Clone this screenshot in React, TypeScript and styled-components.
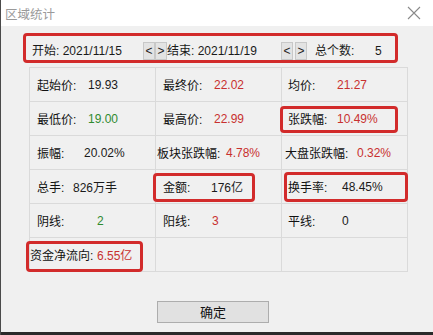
import React from 'react';
import styled, { createGlobalStyle } from 'styled-components';

const GlobalStyle = createGlobalStyle`
  html, body {
    margin: 0;
    padding: 0;
    background: #f0f0f0;
  }
  * {
    box-sizing: border-box;
  }
`;

type Tone = 'plain' | 'red' | 'green';

type Stat = {
  label: string;
  value?: string;
  tone?: Tone;
  labelAt?: number;
  valueAt?: number;
  mark?: { left: number; top: number; width: number; height: number };
};

const stats: Stat[] = [
  { label: '起始价:', value: '19.93', labelAt: 8, valueAt: 59 },
  { label: '最终价:', value: '22.02', tone: 'red', labelAt: 8, valueAt: 59 },
  { label: '均价:', value: '21.27', tone: 'red', labelAt: 7, valueAt: 56 },
  { label: '最低价:', value: '19.00', tone: 'green', labelAt: 8, valueAt: 59 },
  { label: '最高价:', value: '22.99', tone: 'red', labelAt: 8, valueAt: 59 },
  {
    label: '张跌幅:', value: '10.49%', tone: 'red', labelAt: 7, valueAt: 56,
    mark: { left: -2, top: 4, width: 118, height: 27 },
  },
  { label: '振幅:', value: '20.02%', labelAt: 8, valueAt: 55 },
  { label: '板块张跌幅:', value: '4.78%', tone: 'red', labelAt: 2, valueAt: 71 },
  { label: '大盘张跌幅:', value: '0.32%', tone: 'red', labelAt: 4, valueAt: 76 },
  { label: '总手:', value: '826万手', labelAt: 8, valueAt: 44 },
  {
    label: '金额:', value: '176亿', labelAt: 8, valueAt: 56,
    mark: { left: -3, top: 3, width: 102, height: 29 },
  },
  {
    label: '换手率:', value: '48.45%', labelAt: 7, valueAt: 61,
    mark: { left: 2, top: 2, width: 124, height: 30 },
  },
  { label: '阴线:', value: '2', tone: 'green', labelAt: 8, valueAt: 68 },
  { label: '阳线:', value: '3', tone: 'red', labelAt: 8, valueAt: 57 },
  { label: '平线:', value: '0', labelAt: 7, valueAt: 61 },
  {
    label: '资金净流向:', value: '6.55亿', tone: 'red', labelAt: 1, valueAt: 68,
    mark: { left: -4, top: 3, width: 117, height: 31 },
  },
  { label: '' },
  { label: '' },
];

const toneColor: Record<Tone, string> = {
  plain: '#1a1a1a',
  red: '#c8302f',
  green: '#2f8a2f',
};

const Window = styled.div`
  width: 433px;
  height: 335px;
  display: flex;
  flex-direction: column;
  background: #f0f0f0;
  border-left: 1px solid #4a4a4a;
  font-family: "Liberation Sans", "Noto Sans CJK SC", sans-serif;
  font-size: 12px;
  color: #1a1a1a;
`;

const TitleBar = styled.div`
  height: 26px;
  flex-shrink: 0;
  display: flex;
  align-items: center;
  justify-content: space-between;
  padding: 0 11px 0 4px;
  background: #ffffff;
`;

const Title = styled.span`
  font-family: "Noto Sans CJK SC", sans-serif;
  font-size: 12.5px;
  color: #9a9a9a;
`;

const Close = styled.svg`
  width: 16px;
  height: 16px;
`;

const Body = styled.div`
  flex: 1;
  display: flex;
  flex-direction: column;
  padding-top: 7px;
`;

const Header = styled.div`
  margin-left: 22px;
  width: 375px;
  height: 30px;
  display: flex;
  align-items: flex-end;
  padding: 0 0 1px 6px;
  border: 3px solid #d22b2b;
  border-radius: 4px;
  line-height: 16px;
  white-space: nowrap;
`;

const Field = styled.span<{ $width: number }>`
  width: ${p => p.$width}px;
  flex-shrink: 0;
`;

const Spin = styled.span`
  width: 12px;
  height: 18px;
  flex-shrink: 0;
  display: flex;
  align-items: center;
  justify-content: center;
  background: #e3e3e3;
  border: 1px solid #c8c8c8;
  font-size: 12px;
  color: #222;
  margin-bottom: -1px;
`;

const SpinPair = styled.span<{ $gap: number }>`
  display: flex;
  gap: ${p => p.$gap}px;
`;

const Count = styled.span`
  margin-left: 8px;
  width: 60px;
  flex-shrink: 0;
`;

const Grid = styled.div`
  margin: 4px 0 0 28px;
  width: 379px;
  display: grid;
  grid-template-columns: repeat(3, 126px);
  grid-auto-rows: 34px;
  border-top: 1px solid #dadada;
  border-left: 1px solid #dadada;
`;

const Cell = styled.div<{ $labelAt: number }>`
  position: relative;
  display: flex;
  align-items: center;
  padding-left: ${p => p.$labelAt - 1}px;
  border-right: 1px solid #dadada;
  border-bottom: 1px solid #dadada;
  white-space: nowrap;
`;

const Label = styled.span<{ $width: number }>`
  width: ${p => p.$width}px;
  flex-shrink: 0;
  color: #111;
`;

const Value = styled.span<{ $tone: Tone }>`
  color: ${p => toneColor[p.$tone]};
`;

const Mark = styled.span`
  position: absolute;
  border: 3px solid #d22b2b;
  border-radius: 4px;
  pointer-events: none;
`;

const Footer = styled.div`
  margin: 29px 0 0 156px;
`;

const OkButton = styled.button`
  width: 112px;
  height: 22px;
  padding: 0;
  background: #e1e1e1;
  border: 1px solid #adadad;
  font-family: "Noto Sans CJK SC", sans-serif;
  font-size: 13px;
  color: #111;
  line-height: 18px;
`;

const BottomEdge = styled.div`
  height: 3px;
  flex-shrink: 0;
  background: #2a2a2a;
`;

export default function App() {
  return (
    <>
      <GlobalStyle />
      <Window>
        <TitleBar>
          <Title>区域统计</Title>
          <Close viewBox="0 0 16 16">
            <path d="M2 2L14 14M14 2L2 14" stroke="#8a8a8a" strokeWidth="1.1" fill="none" />
          </Close>
        </TitleBar>
        <Body>
          <Header>
            <Field $width={111}>开始: 2021/11/15</Field>
            <SpinPair $gap={0}>
              <Spin>&lt;</Spin>
              <Spin>&gt;</Spin>
            </SpinPair>
            <Field $width={114}>结束: 2021/11/19</Field>
            <SpinPair $gap={2}>
              <Spin>&lt;</Spin>
              <Spin>&gt;</Spin>
            </SpinPair>
            <Count>总个数:</Count>
            <span>5</span>
          </Header>
          <Grid>
            {stats.map((s, i) => (
              <Cell key={i} $labelAt={s.labelAt ?? 8}>
                {s.label && (
                  <>
                    <Label $width={(s.valueAt ?? 59) - (s.labelAt ?? 8)}>{s.label}</Label>
                    <Value $tone={s.tone ?? 'plain'}>{s.value}</Value>
                  </>
                )}
                {s.mark && (
                  <Mark
                    style={{
                      left: s.mark.left,
                      top: s.mark.top,
                      width: s.mark.width,
                      height: s.mark.height,
                    }}
                  />
                )}
              </Cell>
            ))}
          </Grid>
          <Footer>
            <OkButton>确定</OkButton>
          </Footer>
        </Body>
        <BottomEdge />
      </Window>
    </>
  );
}
